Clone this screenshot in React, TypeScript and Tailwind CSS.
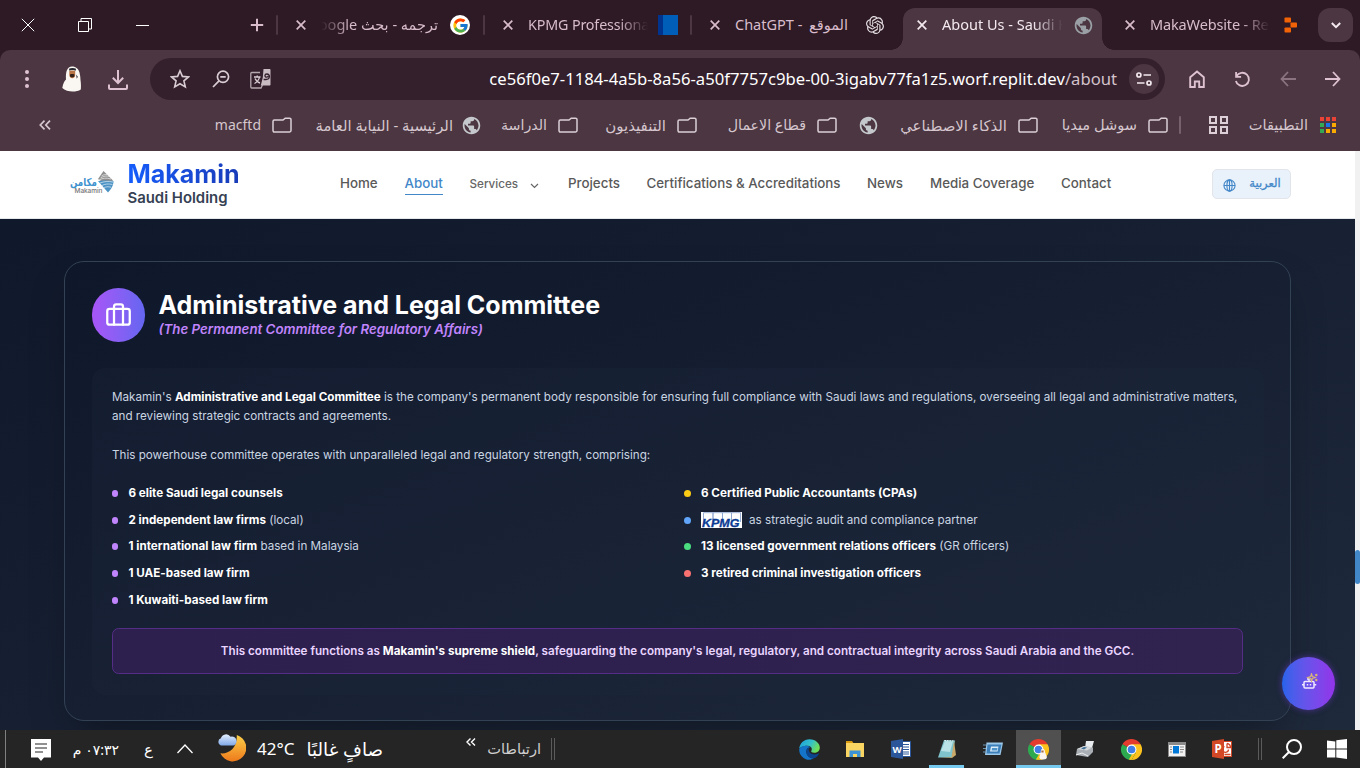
import type { ReactNode } from "react";
import { FcGoogle } from "react-icons/fc";
import { MdPublic } from "react-icons/md";
import { SiOpenai } from "react-icons/si";

/* ---------- Browser chrome icons ---------- */

const CloseX = ({ className = "" }: { className?: string }) => (
  <svg viewBox="0 0 10 10" className={`h-[10px] w-[10px] shrink-0 ${className}`} fill="none" stroke="currentColor" strokeWidth="1.7">
    <path d="M.7.7l8.6 8.6M9.3.7L.7 9.3" />
  </svg>
);

const FolderIcon = ({ className = "" }: { className?: string }) => (
  <svg viewBox="0 0 20 16" className={`h-4 w-5 shrink-0 text-[#dcd0d6] ${className}`} fill="none" stroke="currentColor" strokeWidth="1.5">
    <path d="M1 4.400c0-.8.6-1.400 1.400-1.400h8.600l2.200-1.800h4.400c.8 0 1.400.6 1.400 1.400v11c0 .8-.6 1.400-1.400 1.400H2.400C1.600 15 1 14.400 1 13.600z" />
  </svg>
);

const Divider = ({ className = "" }: { className?: string }) => (
  <div className={`h-5 w-[2px] shrink-0 rounded bg-[#4b3641] ${className}`} />
);

const Avatar = () => (
  <svg viewBox="0 0 20 26" className="h-[26px] w-5 shrink-0">
    <path d="M10 .5c4 0 6.500 2.500 7.500 6 .6 2.500 1 5 1 7.500.5 3.500.6 7 .3 9.500-2 1.500-5 2-8.300 2S2.500 24.500.3 22C1 18 2 15.500 4 13.500 3.500 6 5 .5 10 .5z" fill="#faf7f2" />
    <path d="M7 2.700c2-1.100 5-1.100 7 .1l-.3 1.900c-2-.9-4.500-.9-6.300 0z" fill="#26262e" />
    <path d="M7.300 5c2-.7 4.200-.7 5.900 0v4c0 2-1.400 3.200-3 3.200S7.300 11 7.300 9z" fill="#b97445" />
    <path d="M8 8.500c1.200-.6 3-.6 4.400 0v1.800c-.6 1.300-3.600 1.300-4.400 0z" fill="#33211a" />
    <path d="M14 8.500l2 2.200-1.300 2z" fill="#55515a" />
  </svg>
);

/* ---------- Tab strip ---------- */

function TabStrip() {
  return (
    <div className="flex h-[50px] items-center overflow-hidden bg-[#2d1a24] text-[14.5px] text-[#d9bccb]">
      <svg viewBox="0 0 14 14" className="ml-[21px] h-[14px] w-[14px] shrink-0 text-white" fill="none" stroke="currentColor">
        <path d="M.8.8l12.400 12.400M13.200.8L.8 13.200" />
      </svg>
      <svg viewBox="0 0 14 14" className="ml-[43px] h-[14px] w-[14px] shrink-0 text-white" fill="none" stroke="currentColor">
        <path d="M.5 3.500h10v10h-10zM3 3V.5h10.500V11H11" />
      </svg>
      <div className="ml-[44px] h-px w-[13px] shrink-0 bg-white" />
      <svg viewBox="0 0 14 14" className="ml-[101px] h-[14px] w-[14px] shrink-0" fill="none" stroke="currentColor" strokeWidth="2">
        <path d="M7 .8v12.400M.8 7h12.400" />
      </svg>
      <Divider className="ml-[12px]" />
      <CloseX className="ml-[18px]" />
      <div dir="rtl" className="ml-[15px] w-[117px] shrink-0 overflow-hidden whitespace-nowrap py-2 [mask-image:linear-gradient(to_right,transparent,black_30px)]">
        ترجمه - بحث Google
      </div>
      <div className="ml-[12px] flex size-5 shrink-0 items-center justify-center rounded-full bg-white">
        <FcGoogle size={17} />
      </div>
      <Divider className="ml-[13px]" />
      <CloseX className="ml-[18px]" />
      <div className="ml-[15px] w-[120px] shrink-0 overflow-hidden whitespace-nowrap py-2 text-[14.3px] tracking-[-0.01em] [mask-image:linear-gradient(to_left,transparent,black_30px)]">
        KPMG Professiona
      </div>
      <div className="ml-[10px] h-5 w-5 shrink-0 border-l-[5px] border-[#00338d] bg-[#005eb8]" />
      <Divider className="ml-[12px]" />
      <CloseX className="ml-[18px]" />
      <div className="ml-[15px] flex w-[113px] shrink-0 justify-between whitespace-nowrap py-2">
        <span>ChatGPT -</span>
        <span dir="rtl">الموقع</span>
      </div>
      <SiOpenai className="ml-[18px] shrink-0 text-[#e4dde1]" size={18} />

      {/* Active tab with curved feet */}
      <div className="ml-[7px] flex h-full w-[223px] shrink-0 items-end">
        <div className="h-3 w-3 shrink-0 bg-[radial-gradient(circle_at_0_0,#2d1a24_11.5px,#4b3641_12px)]" />
        <div className="flex h-[42px] w-[199px] shrink-0 items-center rounded-t-[12px] bg-[#4b3641] pb-[8px] text-[#f3e9ee]">
          <CloseX className="ml-[14px]" />
          <div className="ml-[15px] w-[121px] shrink-0 overflow-hidden whitespace-nowrap py-2 [mask-image:linear-gradient(to_left,transparent,black_30px)]">
            About Us - Saudi H
          </div>
          <MdPublic className="ml-[10px] shrink-0 text-[#9aa0a6]" size={21} />
        </div>
        <div className="h-3 w-3 shrink-0 bg-[radial-gradient(circle_at_100%_0,#2d1a24_11.5px,#4b3641_12px)]" />
      </div>

      <CloseX className="ml-[11px]" />
      <div className="ml-[15px] w-[120px] shrink-0 overflow-hidden whitespace-nowrap py-2 tracking-[-0.01em] [mask-image:linear-gradient(to_left,transparent,black_30px)]">
        MakaWebsite - Re
      </div>
      <svg viewBox="0 0 14 16" className="ml-[13px] h-4 w-[15px] shrink-0" fill="#f26207">
        <rect x="1" y=".5" width="6.500" height="5" rx=".8" />
        <rect x="7" y="5.500" width="6.500" height="5" rx=".8" />
        <rect x="1" y="10.500" width="6.500" height="5" rx=".8" />
      </svg>
      <div className="ml-[20px] flex h-[34px] w-[35px] shrink-0 items-center justify-center rounded-[12px] bg-[#4b3641]">
        <svg viewBox="0 0 10 7" className="h-[7px] w-[10px]" fill="none" stroke="#f3e9ee" strokeWidth="2">
          <path d="M.8 1L5 5.200 9.200 1" />
        </svg>
      </div>
    </div>
  );
}

/* ---------- Toolbar ---------- */

function Toolbar() {
  return (
    <div className="flex h-[58px] items-center text-[#dfc2d1]">
      <div className="ml-[25px] flex w-[4px] shrink-0 flex-col gap-[3px]">
        <i className="size-[4px] rounded-full bg-current" />
        <i className="size-[4px] rounded-full bg-current" />
        <i className="size-[4px] rounded-full bg-current" />
      </div>
      <div className="ml-[33px] w-5 shrink-0">
        <Avatar />
      </div>
      <svg viewBox="0 0 20 20" className="ml-[26px] mt-px h-5 w-5 shrink-0" fill="none" stroke="currentColor" strokeWidth="2">
        <path d="M10 0v12.500M4.800 7.800L10 13l5.200-5.200M1 14.500V18c0 .6.400 1 1 1h16c.6 0 1-.4 1-1v-3.500" />
      </svg>
      <div className="ml-[22px] flex h-[42px] w-[1015px] shrink-0 items-center rounded-full bg-[#34202c] text-[#d9cdd3]">
        <svg viewBox="0 0 20 20" className="ml-5 h-5 w-5 shrink-0" fill="none" stroke="currentColor" strokeWidth="1.600">
          <path d="M10 1.800l2.400 5.600 6.100.5-4.600 4 1.400 6L10 14.700l-5.300 3.200 1.400-6-4.600-4 6.100-.5z" />
        </svg>
        <svg viewBox="0 0 18 18" className="ml-[22px] h-[18px] w-[18px] shrink-0" fill="none" stroke="currentColor" strokeWidth="1.700">
          <circle cx="11" cy="6.800" r="5.600" />
          <path d="M7 10.800L1 17M8.300 6.800h5.400" />
        </svg>
        <svg viewBox="0 0 22 22" className="ml-[20px] h-[22px] w-[22px] shrink-0">
          <path d="M10 4.500H1.700c-.5 0-.9.4-.9.900v13.700c0 .5.4.9.9.9H11l1.500-3" fill="none" stroke="#b5a8af" strokeWidth="1.300" />
          <path d="M4 9h6.500M7.200 7.500V9M9.500 9c-.5 3-2.500 5-5 6.500M5 10.500c1 2 3 4 5 4.500" fill="none" stroke="#d9cdd3" strokeWidth="1.300" />
          <path d="M13.500 1h6c.6 0 1 .4 1 1v14.500c0 .6-.4 1-1 1h-8.700l2-8z" fill="#c9bcc3" />
          <path d="M13.600 11.500h2.500c4 0 4.500-5.500.8-5.500-2.500 0-2.700 3.200-.2 3.200 1 0 1.500-.6 1.500-1.400" fill="none" stroke="#34202c" strokeWidth="1.300" />
        </svg>
        <div className="w-[845px] shrink-0 whitespace-nowrap text-right text-[16.65px] text-white">
          ce56f0e7-1184-4a5b-8a56-a50f7757c9be-00-3igabv77fa1z5.worf.replit.dev<span className="text-[#d3c2cb]">/about</span>
        </div>
        <div className="ml-[12px] flex size-[30px] shrink-0 items-center justify-center rounded-full bg-[#4b3641]">
          <svg viewBox="0 0 16 14" className="h-[14px] w-4" fill="none" stroke="#f3e9ee" strokeWidth="1.700">
            <circle cx="2.900" cy="3" r="2" />
            <path d="M7.500 3H15M1 11h7.500" />
            <circle cx="13" cy="11" r="2" />
          </svg>
        </div>
      </div>
      <svg viewBox="0 0 16 18" className="ml-[24px] h-[18px] w-4 shrink-0" fill="none" stroke="currentColor" strokeWidth="1.900">
        <path d="M1.200 7.200L8 1.500l6.800 5.700V17h-4.600v-5.500H5.800V17H1.200z" />
      </svg>
      <svg viewBox="0 0 18 18" className="ml-[29px] h-[17px] w-[17px] shrink-0" fill="none" stroke="currentColor" strokeWidth="1.900">
        <path d="M2.600 5.600A7 7 0 1 1 2 10.500M2.200 1v5.300h5.300" />
      </svg>
      <svg viewBox="0 0 16 16" className="ml-[29px] h-4 w-4 shrink-0 text-[#8b7480]" fill="none" stroke="currentColor" strokeWidth="1.800">
        <path d="M8 1L1.500 8 8 15M1.500 8H16" />
      </svg>
      <svg viewBox="0 0 16 16" className="ml-[29px] h-4 w-4 shrink-0" fill="none" stroke="currentColor" strokeWidth="1.800">
        <path d="M8 1l6.500 7L8 15M14.500 8H0" />
      </svg>
    </div>
  );
}

/* ---------- Bookmarks ---------- */

const Mark = ({ className, children }: { className: string; children: ReactNode }) => (
  <span dir="rtl" className={`shrink-0 whitespace-nowrap ${className}`}>
    {children}
  </span>
);

const appDots = ["bg-[#ea4335]", "bg-[#ea4335]", "bg-[#ea4335]", "bg-[#34a853]", "bg-[#1a73e8]", "bg-[#f9ab00]", "bg-[#34a853]", "bg-[#f9ab00]", "bg-[#f9ab00]"];

function Bookmarks() {
  return (
    <div className="flex h-[43px] items-center pb-[9px] text-[14.6px] text-[#d6c6ce]">
      <svg viewBox="0 0 12 10" className="ml-[39px] h-[10px] w-3 shrink-0" fill="none" stroke="currentColor" strokeWidth="1.700">
        <path d="M5.500.7L1.300 5l4.200 4.300M11 .7L6.800 5 11 9.300" />
      </svg>
      <Mark className="ml-[164px] w-[46px] pb-px text-[14px]">macftd</Mark>
      <FolderIcon className="ml-[11px]" />
      <Mark className="ml-[22px] w-[139px] text-[14.8px]">الرئيسية - النيابة العامة</Mark>
      <MdPublic className="ml-[8px] shrink-0 text-[#c4c7cb]" size={21} />
      <Mark className="ml-[19px] w-[46px] text-[14.2px]">الدراسة</Mark>
      <FolderIcon className="ml-[11px]" />
      <Mark className="ml-[26px] w-[62px] text-[15px]">التنفيذيون</Mark>
      <FolderIcon className="ml-[11px]" />
      <Mark className="ml-[30px] w-[79px] text-[14.2px]">قطاع الاعمال</Mark>
      <FolderIcon className="ml-[11px]" />
      <MdPublic className="ml-[21px] shrink-0 text-[#c4c7cb]" size={21} />
      <Mark className="ml-[20px] w-[108px] text-[14.9px]">الذكاء الاصطناعي</Mark>
      <FolderIcon className="ml-[11px]" />
      <Mark className="ml-[22px] w-[77px]">سوشل ميديا</Mark>
      <FolderIcon className="ml-[11px]" />
      <div className="ml-[11px] h-[18px] w-[2px] shrink-0 rounded bg-[#77616d]" />
      <div className="ml-[28px] grid w-[19px] shrink-0 grid-cols-2 gap-[2px]">
        <i className="h-2 w-2 border-2 border-[#dcd0d6]" />
        <i className="h-2 w-2 border-2 border-[#dcd0d6]" />
        <i className="h-2 w-2 border-2 border-[#dcd0d6]" />
        <i className="h-2 w-2 border-2 border-[#dcd0d6]" />
      </div>
      <Mark className="ml-[20px] w-[60px]">التطبيقات</Mark>
      <div className="ml-[12px] grid w-[16px] shrink-0 grid-cols-3 gap-[2px]">
        {appDots.map((c, i) => (
          <i key={i} className={`h-[4px] w-[4px] ${c}`} />
        ))}
      </div>
    </div>
  );
}

/* ---------- Website header ---------- */

function MakaminLogo() {
  return (
    <svg viewBox="0 0 46 28" className="h-7 w-[46px]">
      <path d="M33.500 0L43 9.500 37 14 28 8z" fill="#8f8f8f" />
      <path d="M28 10c5-1 9-.5 15.500 0C43.500 15 41 18 38 21.500z" fill="#4b93c4" />
      <path d="M29 9c4-2 7-2.500 12-1M30.500 7c3-2 6-2.500 9-1.500M31.500 5c2-1.400 3.500-1.600 5.500-1.400M30 12c4-1.500 8-2 13-1M32 14.500c3-1.500 6-2 10.500-1M34 17c2-1.500 4-1.500 7-.8" fill="none" stroke="#fff" strokeWidth=".6" />
      <text x="27" y="15" direction="rtl" fontSize="11" fontWeight="700" fill="#3f93cf" fontFamily="DejaVu Sans" textLength="27" lengthAdjust="spacingAndGlyphs">
        مكامن
      </text>
      <text x="4.500" y="22" fontSize="6.500" fill="#777" fontFamily="Inter" textLength="28">
        Makamin
      </text>
    </svg>
  );
}

function SiteHeader() {
  return (
    <header className="flex h-[68px] items-center border-b border-[#e5e7eb] bg-white text-[13.333px] font-medium text-[#595959]">
      <div className="ml-[70px] mt-px w-[57.500px] shrink-0">
        <MakaminLogo />
      </div>
      <div className="w-[212.500px] shrink-0">
        <div className="w-fit bg-linear-to-r from-blue-600 to-blue-800 bg-clip-text text-[25px] font-bold leading-[27px] text-transparent">Makamin</div>
        <div className="text-[14.9px] font-semibold leading-[20px] text-gray-700">Saudi Holding</div>
      </div>
      <nav className="flex w-[872px] shrink-0 items-center whitespace-nowrap pb-px">
        <span className="w-[64.500px]">Home</span>
        <span className="w-[65px]">
          <span className="border-b border-[#4287c8] pb-[3px] text-[#4287c8]">About</span>
        </span>
        <span className="flex w-[98.500px] items-center gap-[12px] pt-px text-[11.667px] text-[#666]">
          Services
          <svg viewBox="0 0 8 6" className="mt-[3px] h-[6px] w-[9px]" fill="none" stroke="currentColor" strokeWidth="1.200">
            <path d="M.5 1L4 4.500 7.500 1" />
          </svg>
        </span>
        <span className="w-[78.500px]">Projects</span>
        <span className="w-[220.500px]">Certifications &amp; Accreditations</span>
        <span className="w-[63px]">News</span>
        <span className="w-[131px]">Media Coverage</span>
        <span>Contact</span>
      </nav>
      <button className="mb-px flex h-[30px] w-[79px] shrink-0 items-center rounded-[5px] border border-[#e2e5ea] bg-[#e9f1fb] pl-[10px] text-[#4287c8]">
        <svg viewBox="0 0 14 14" className="mt-[2px] h-[13px] w-[13px]" fill="none" stroke="currentColor" strokeWidth="1.200">
          <circle cx="7" cy="7" r="6" />
          <ellipse cx="7" cy="7" rx="2.800" ry="6" />
          <path d="M1 7h12M7 1v12" />
        </svg>
        <span dir="rtl" className="ml-[13px] w-[32px] whitespace-nowrap font-['DejaVu_Sans',sans-serif] text-[11.5px] font-medium [-webkit-text-stroke:0.3px_currentColor]">
          العربية
        </span>
      </button>
    </header>
  );
}

/* ---------- Committee card ---------- */

const B = ({ children }: { children: ReactNode }) => <strong className="font-bold text-white">{children}</strong>;

const Item = ({ dot, children }: { dot: string; children: ReactNode }) => (
  <li className="flex h-[20px] items-center whitespace-nowrap">
    <i className={`mt-px h-[7px] shrink-0 rounded-full ${dot}`} />
    <span>{children}</span>
  </li>
);

const Kpmg = () => (
  <svg viewBox="0 0 41 16" className="mr-[7px] inline-block h-4 w-[41px] align-[-4px]">
    <rect width="41" height="16" fill="#fff" />
    <path d="M2.500 11V.7h9.500V10M12 10V.7h9.500V10M21.500 10V.7h9V10M30.500 10V.7h9V10" fill="#fff" stroke="#8fa6d0" strokeWidth=".9" />
    <text x="1" y="15" fontSize="11.500" fontWeight="700" fontStyle="italic" fontFamily="Liberation Sans" fill="#0c3b94" stroke="#0c3b94" strokeWidth=".3" textLength="37.500" lengthAdjust="spacingAndGlyphs">
      KPMG
    </text>
  </svg>
);

function CommitteeCard() {
  return (
    <section className="h-[460px] w-[1227px] rounded-[20px] border border-[#334155] bg-linear-to-br from-[#0f172a] to-[#1e293b] px-[27px] pt-[26px] shadow-[0_20px_42px_-10px_rgba(0,0,0,0.35)]">
      <div className="flex h-[54px]">
        <div className="flex h-[54px] w-[53px] items-center justify-center rounded-full bg-linear-to-r from-[#a855f7] to-[#6366f1]">
          <svg viewBox="0 0 24 24" className="mb-px size-[27px]" fill="none" stroke="#fff" strokeWidth="2" strokeLinecap="round" strokeLinejoin="round">
            <rect x="2" y="7" width="20" height="14" rx="2" />
            <path d="M16 21V5a2 2 0 0 0-2-2h-4a2 2 0 0 0-2 2v16" />
          </svg>
        </div>
        <div className="ml-[13.500px] whitespace-nowrap">
          <h2 className="mt-[2px] text-[25px] font-bold leading-[30px] text-white">Administrative and Legal Committee</h2>
          <p className="text-[13.300px] font-semibold italic leading-[19px] text-[#c084fc]">(The Permanent Committee for Regulatory Affairs)</p>
        </div>
      </div>
      <div className="mt-[26px] h-[327px] w-[1172px] rounded-[13px] bg-[#1e293b]/30 px-[20px] pt-[20px] text-[11.667px] leading-[19px] text-slate-300">
        <p className="whitespace-nowrap">
          Makamin's <B>Administrative and Legal Committee</B> is the company's permanent body responsible for ensuring full compliance with Saudi laws and regulations, overseeing all legal and administrative matters,
          <br />
          and reviewing strategic contracts and agreements.
        </p>
        <p className="mt-[20px]">This powerhouse committee operates with unparalleled legal and regulatory strength, comprising:</p>
        <div className="mt-[18px] grid grid-cols-[572px_auto] leading-[20px]">
          <ul className="flex flex-col gap-[6.667px]">
            <Item dot="mr-[10.500px] w-[6px] bg-[#c084fc]"><B>6 elite Saudi legal counsels</B></Item>
            <Item dot="mr-[10.500px] w-[6px] bg-[#c084fc]"><B>2 independent law firms</B> (local)</Item>
            <Item dot="mr-[10.500px] w-[6px] bg-[#c084fc]"><B>1 international law firm</B> based in Malaysia</Item>
            <Item dot="mr-[10.500px] w-[6px] bg-[#c084fc]"><B>1 UAE-based law firm</B></Item>
            <Item dot="mr-[10.500px] w-[6px] bg-[#c084fc]"><B>1 Kuwaiti-based law firm</B></Item>
          </ul>
          <ul className="flex flex-col gap-[6.667px]">
            <Item dot="mr-[10px] w-[7px] bg-[#facc15]"><B>6 Certified Public Accountants (CPAs)</B></Item>
            <Item dot="mr-[10px] w-[7px] bg-[#60a5fa]"><Kpmg />as strategic audit and compliance partner</Item>
            <Item dot="mr-[10px] w-[7px] bg-[#4ade80]"><B>13 licensed government relations officers</B> (GR officers)</Item>
            <Item dot="mr-[10px] w-[7px] bg-[#f87171]"><B>3 retired criminal investigation officers</B></Item>
          </ul>
        </div>
        <div className="mt-[18px] flex h-[46px] w-[1131px] items-center justify-center whitespace-nowrap rounded-[6.667px] border border-[#562d86] bg-linear-to-r from-[#2d1f4e] to-[#312350] pt-[2px] font-semibold text-[#e9d5ff]">
          <span>This committee functions as <B>Makamin's supreme shield</B>, safeguarding the company's legal, regulatory, and contractual integrity across Saudi Arabia and the GCC.</span>
        </div>
      </div>
    </section>
  );
}

/* ---------- Taskbar icons ---------- */

const EdgeIcon = () => (
  <svg viewBox="0 0 20 20" className="size-[21px]">
    <defs>
      <linearGradient id="edgeTop" x1="0" y1="0" x2="1" y2=".4">
        <stop offset="0" stopColor="#1a9fe0" />
        <stop offset=".6" stopColor="#35c1c9" />
        <stop offset="1" stopColor="#6ee05a" />
      </linearGradient>
    </defs>
    <path d="M.2 9.500C.5 4.500 4.500.3 10 .3c6 0 9.800 4 9.800 8 0 3-2.500 4.800-5.300 4.800-2.300 0-3.200-.8-2.800-1.600 1.200-1.800.2-4.700-3.200-5C4.500 6.300 1 8 .2 9.500z" fill="url(#edgeTop)" />
    <path d="M.2 9.500C1.500 7.500 4 6.300 6.800 6.400c2 .1 3.500.8 4.200 1.800-2.500-.6-4.200 1.300-4 4 .2 3.700 3.500 6.500 7 6.200-1.300.9-2.700 1.400-4.200 1.400C4.300 19.800-.2 15 .2 9.500z" fill="#1374c9" />
    <path d="M7 12.200C7 9.800 8 8.400 9.800 8.200c-1 1.500-.6 3.300.5 4.600 1.700 2 5 2.500 8 .9.6-.2.8.2.6.6-1 2-2.800 3.500-4.900 4.100C10 18.500 7 16 7 12.200z" fill="#0b458f" />
  </svg>
);

const ChromeIcon = ({ badge = false }: { badge?: boolean }) => (
  <svg viewBox="0 0 24 24" className="size-[21px]">
    <path d="M12 12L1.600 6A12 12 0 0 1 22.400 6z" fill="#e33b2e" />
    <path d="M12 12L1.600 6A12 12 0 0 0 12 24z" fill="#2da94f" />
    <path d="M12 24l5.200-9L12 6h10.400A12 12 0 0 1 12 24z" fill="#fcc31e" />
    <path d="M12 24l5.200-9L12 12l-5.200 3z" fill="#2da94f" />
    <path d="M12 24l5.200-9H14l-5 8.500z" fill="#fcc31e" />
    <circle cx="12" cy="12" r="5.600" fill="#fff" />
    <circle cx="12" cy="12" r="4.400" fill="#3f7ee8" />
    {badge && (
      <g>
        <path d="M16.500 11c2 0 3 1.500 3 4l2 5c.5 2-1 3.500-4 3.500s-5-1-4.500-3l1.500-5c0-3 .8-4.500 2-4.500z" fill="#faf5ee" />
        <path d="M15.300 13h2.500v2.500h-2.500z" fill="#a8693f" />
      </g>
    )}
  </svg>
);

const OfficeIcon = ({ kind }: { kind: "W" | "P" }) => (
  <svg viewBox="0 0 20 20" className="size-[20px]">
    <rect x="10" y="2.500" width="9.500" height="15" fill="#fff" stroke={kind === "W" ? "#2b579a" : "#d24726"} />
    {kind === "W" ? (
      <path d="M12 5.500h6M12 8h6M12 10.500h6M12 13h6M12 15h6" stroke="#2b579a" strokeWidth="1.100" />
    ) : (
      <path d="M15 4.500v4h3.500a3.700 3.700 0 0 0-3.500-4M12.500 7.500a3 3 0 1 0 4 3M12.500 15.500h6" stroke="#d24726" strokeWidth="1.300" fill="none" />
    )}
    <path d="M0 2L12 0v20L0 18z" fill={kind === "W" ? "#2b579a" : "#d24726"} />
    <text x="6" y="14" textAnchor="middle" fontSize={kind === "W" ? "9.500" : "11.500"} fontWeight="700" fill="#fff" fontFamily="Open Sans">
      {kind}
    </text>
  </svg>
);

function Taskbar() {
  return (
    <footer className="flex h-[38px] items-center bg-[#252525] text-white">
      <div className="ml-[5px] h-full w-px shrink-0 bg-[#808080]" />
      <svg viewBox="0 0 20 22" className="ml-[25px] mt-[2px] h-[22px] w-5 shrink-0">
        <path d="M0 0h20v18.500h-7L10 22l-3-3.500H0z" fill="#fff" />
        <path d="M4 5h12M4 9h12M4 13h8" stroke="#252525" strokeWidth="1.200" />
      </svg>
      <span dir="rtl" className="ml-[21px] w-[47px] shrink-0 whitespace-nowrap text-[14px]">٠٧:٣٢ م</span>
      <span className="ml-[25px] w-[9px] shrink-0 text-[15px]">ع</span>
      <svg viewBox="0 0 16 10" className="ml-[24px] h-[10px] w-4 shrink-0" fill="none" stroke="#fff" strokeWidth="1.300">
        <path d="M.5 9L8 1l7.500 8" />
      </svg>
      <svg viewBox="0 0 30 30" className="ml-[24px] mb-[3px] h-[29px] w-[29px] shrink-0">
        <defs>
          <linearGradient id="moon" x1="0" y1="0" x2="0" y2="1">
            <stop offset="0" stopColor="#fbd04a" />
            <stop offset="1" stopColor="#ee7a1b" />
          </linearGradient>
          <linearGradient id="cloud" x1="0" y1="0" x2="0" y2="1">
            <stop offset="0" stopColor="#e4efff" />
            <stop offset="1" stopColor="#7fa8e8" />
          </linearGradient>
        </defs>
        <path d="M20.500 2a14 14 0 1 1-17 19C12 22 21 16 20.500 2z" fill="url(#moon)" />
        <path d="M4 13a4 4 0 0 1 0-7.500 5.500 5.500 0 0 1 10-1.500 4.500 4.500 0 0 1 3 9z" fill="url(#cloud)" />
      </svg>
      <span className="ml-[11px] w-[38px] shrink-0 whitespace-nowrap text-[17px]">42°C</span>
      <span dir="rtl" className="ml-[11px] w-[77px] shrink-0 whitespace-nowrap text-[18.300px] leading-[30px]">صافٍ غالبًا</span>
      <svg viewBox="0 0 10 8" className="mb-[14px] ml-[83px] h-2 w-[10px] shrink-0" fill="none" stroke="#fff" strokeWidth="1.400">
        <path d="M4.500.5L1 4l3.500 3.500M9 .5L5.500 4 9 7.500" />
      </svg>
      <span dir="rtl" className="ml-[11px] w-[54px] shrink-0 whitespace-nowrap text-[14.600px] text-[#cfcfcf]">ارتباطات</span>
      <div className="ml-[10px] h-[22px] w-[4px] shrink-0 border-x border-[#5b5b5b]" />

      <div className="ml-[231px] flex h-full w-[460px] shrink-0">
        <div className="flex w-[46px] items-center justify-center"><EdgeIcon /></div>
        <div className="flex w-[46px] items-center justify-center">
          <svg viewBox="0 0 20 18" className="h-[18px] w-5">
            <path d="M1 1h6l2 3H1z" fill="#d99a12" />
            <path d="M1 3h18v14H1z" fill="#fbd562" />
            <path d="M4.500 17v-6.500h11V17H12v-3H8v3z" fill="#3e93d4" />
          </svg>
        </div>
        <div className="flex w-[46px] items-center justify-center"><OfficeIcon kind="W" /></div>
        <div className="flex w-[45px] items-center justify-center">
          <div className="flex h-full w-[35px] items-center justify-center border-b-[3px] border-[#76c9ee] pt-[3px]">
            <svg viewBox="0 0 20 20" className="size-5">
              <path d="M7 1l11 .5-3 17H1z" fill="#7fc3cc" />
              <path d="M8 2l8 .5L13 13 4 12z" fill="#b9e2e6" />
              <path d="M17 2l2 14-4 3-12-.3 11.500-.5z" fill="#c9a96b" />
              <path d="M7.500 1.500l10 .5" stroke="#e5eff0" strokeDasharray="1.500 1" />
            </svg>
          </div>
        </div>
        <div className="flex w-[47px] items-center justify-center">
          <svg viewBox="0 0 20 16" className="h-4 w-5">
            <path d="M3.500 1.500H20L17.500 14H2z" fill="#9cc8ea" />
            <path d="M4.500 3.500h14L16.500 12.500h-13z" fill="#3d7fb8" />
            <path d="M8 5.500h7.500l-1 5H7z" fill="#d8ecf9" />
            <path d="M9 7h5.500l-.5 2.500H8.700z" fill="#4f92c8" />
            <path d="M0 4h3M0 7.500h3M0 11h2.500" stroke="#7fb2d9" strokeWidth=".8" />
          </svg>
        </div>
        <div className="flex w-[45px] items-center justify-center border-b-[3px] border-[#76c9ee] bg-[#505050] pt-[3px]"><ChromeIcon badge /></div>
        <div className="flex w-[47px] items-center justify-center">
          <svg viewBox="0 0 20 18" className="h-[18px] w-5">
            <path d="M11 1h8l-2 7h-7z" fill="#e8ecee" />
            <path d="M2 9l7-3 9 1.500V12l-5 5-12-2z" fill="#a9afb4" />
            <path d="M2 9l7-3 8 1.500-5 3z" fill="#d4d8db" />
            <path d="M6 8.500l3-1.500 3 .5-3 2z" fill="#3f6f95" />
            <path d="M1 15l6-2 6 3" stroke="#eee" fill="none" />
          </svg>
        </div>
        <div className="flex w-[46px] items-center justify-center"><ChromeIcon /></div>
        <div className="flex w-[45px] items-center justify-center">
          <svg viewBox="0 0 18 15" className="h-[15px] w-[18px]">
            <rect width="18" height="15" fill="#8a8a8a" />
            <rect x="1" y="3" width="16" height="11" fill="#f3f3f3" />
            <rect x="5" y="4" width="6" height="7.500" fill="#0078d7" />
            <path d="M2 5h2M2 7.500h2M2 10h2M12 5h4M12 7.500h4M12 10h3" stroke="#888" />
          </svg>
        </div>
        <div className="flex w-[46px] items-center justify-center"><OfficeIcon kind="P" /></div>
      </div>

      <div className="ml-[12px] h-[22px] w-[4px] shrink-0 border-x border-[#5b5b5b]" />
      <svg viewBox="0 0 20 20" className="ml-[20px] h-5 w-5 shrink-0" fill="none" stroke="#fff" strokeWidth="2">
        <circle cx="12" cy="8" r="7" />
        <path d="M7 13l-6.300 6.300" />
      </svg>
      <svg viewBox="0 0 20 20" className="ml-[25px] h-5 w-5 shrink-0" fill="#fff">
        <path d="M0 1.400l8.300 1v7.100H0zM9.300 1.200L20 0v9.500H9.300zM0 10.500h8.300v7.900L0 18.600zM9.300 10.500H20V20L9.300 18.600z" />
      </svg>
    </footer>
  );
}

/* ---------- Page ---------- */

export default function App() {
  return (
    <div className="flex h-[768px] w-[1360px] flex-col overflow-hidden bg-[#2d1a24] font-['Noto_Sans','DejaVu_Sans',sans-serif]">
      <TabStrip />
      <div className="h-[101px] rounded-t-[10px] bg-[#4b3641]">
        <Toolbar />
        <Bookmarks />
      </div>
      <div className="flex h-[579px] font-['Inter','Noto_Sans',sans-serif]">
        <main className="relative w-[1355px] shrink-0 bg-linear-to-br from-[#0f172a] to-[#1e293b]">
          <SiteHeader />
          <div className="flex h-[511px] justify-center overflow-hidden pt-[42px]">
            <CommitteeCard />
          </div>
          <button className="absolute left-[1282px] top-[506px] flex size-[53px] items-center justify-center rounded-full bg-linear-to-r from-[#2563eb] to-[#9333ea] shadow-[0_0_6px_rgba(124,58,237,0.5)]">
            <svg viewBox="0 0 16 16" className="mb-[5px] ml-[3px] size-4" fill="none">
              <path d="M3 8.500h8c.6 0 1 .4 1 1V14c0 .6-.4 1-1 1H3c-.6 0-1-.4-1-1V9.500c0-.6.400-1 1-1zM.5 11v1.500M13.500 11v1.500M5.500 11v1.500M8.500 11v1.500M7 8.500V6H5" stroke="#efe8ff" strokeWidth="1.500" />
              <path d="M9.500 1l.9 2.600L13 4.500l-2.600.9L9.500 8l-.9-2.600L6 4.500l2.600-.9z" stroke="#d8b478" strokeWidth="1.300" />
              <circle cx="14.300" cy="2" r="1.300" fill="#d8b478" />
              <circle cx="14.300" cy="7" r="1.200" fill="#d8b478" />
            </svg>
          </button>
        </main>
        <div className="w-[5px] shrink-0 bg-[#f1f1f1] pt-[399px]">
          <div className="h-[34px] rounded-[3px] bg-[#4287c8]" />
        </div>
      </div>
      <Taskbar />
    </div>
  );
}
